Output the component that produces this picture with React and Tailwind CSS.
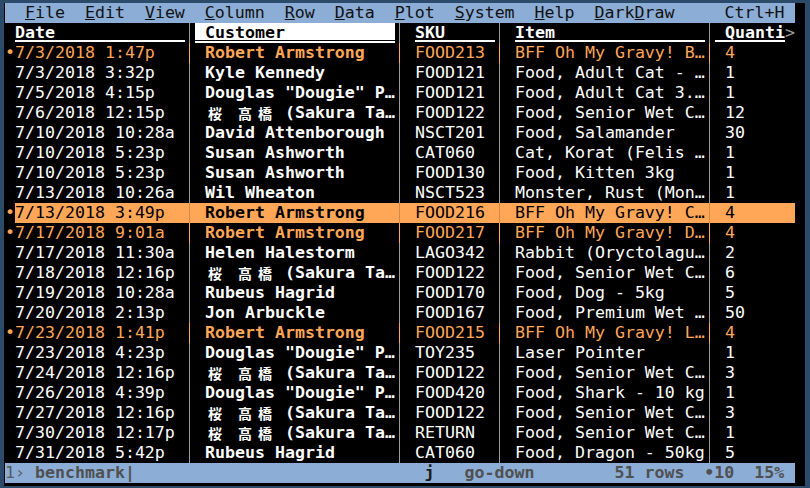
import React from "react";

const rows = [
  { date: "7/3/2018 1:47p", cust: "Robert Armstrong", sku: "FOOD213", item: "BFF Oh My Gravy! B…", qty: "4", sel: true },
  { date: "7/3/2018 3:32p", cust: "Kyle Kennedy", sku: "FOOD121", item: "Food, Adult Cat - …", qty: "1" },
  { date: "7/5/2018 4:15p", cust: 'Douglas "Dougie" P…', sku: "FOOD121", item: "Food, Adult Cat 3.…", qty: "1" },
  { date: "7/6/2018 12:15p", jp: true, sku: "FOOD122", item: "Food, Senior Wet C…", qty: "12" },
  { date: "7/10/2018 10:28a", cust: "David Attenborough", sku: "NSCT201", item: "Food, Salamander", qty: "30" },
  { date: "7/10/2018 5:23p", cust: "Susan Ashworth", sku: "CAT060", item: "Cat, Korat (Felis …", qty: "1" },
  { date: "7/10/2018 5:23p", cust: "Susan Ashworth", sku: "FOOD130", item: "Food, Kitten 3kg", qty: "1" },
  { date: "7/13/2018 10:26a", cust: "Wil Wheaton", sku: "NSCT523", item: "Monster, Rust (Mon…", qty: "1" },
  { date: "7/13/2018 3:49p", cust: "Robert Armstrong", sku: "FOOD216", item: "BFF Oh My Gravy! C…", qty: "4", sel: true, cursor: true },
  { date: "7/17/2018 9:01a", cust: "Robert Armstrong", sku: "FOOD217", item: "BFF Oh My Gravy! D…", qty: "4", sel: true },
  { date: "7/17/2018 11:30a", cust: "Helen Halestorm", sku: "LAGO342", item: "Rabbit (Oryctolagu…", qty: "2" },
  { date: "7/18/2018 12:16p", jp: true, sku: "FOOD122", item: "Food, Senior Wet C…", qty: "6" },
  { date: "7/19/2018 10:28a", cust: "Rubeus Hagrid", sku: "FOOD170", item: "Food, Dog - 5kg", qty: "5" },
  { date: "7/20/2018 2:13p", cust: "Jon Arbuckle", sku: "FOOD167", item: "Food, Premium Wet …", qty: "50" },
  { date: "7/23/2018 1:41p", cust: "Robert Armstrong", sku: "FOOD215", item: "BFF Oh My Gravy! L…", qty: "4", sel: true },
  { date: "7/23/2018 4:23p", cust: 'Douglas "Dougie" P…', sku: "TOY235", item: "Laser Pointer", qty: "1" },
  { date: "7/24/2018 12:16p", jp: true, sku: "FOOD122", item: "Food, Senior Wet C…", qty: "3" },
  { date: "7/26/2018 4:39p", cust: 'Douglas "Dougie" P…', sku: "FOOD420", item: "Food, Shark - 10 kg", qty: "1" },
  { date: "7/27/2018 12:16p", jp: true, sku: "FOOD122", item: "Food, Senior Wet C…", qty: "3" },
  { date: "7/30/2018 12:17p", jp: true, sku: "RETURN", item: "Food, Senior Wet C…", qty: "1" },
  { date: "7/31/2018 5:42p", cust: "Rubeus Hagrid", sku: "CAT060", item: "Food, Dragon - 50kg", qty: "5" },
];

const menu = [
  ["F", "ile"],
  ["E", "dit"],
  ["V", "iew"],
  ["C", "olumn"],
  ["R", "ow"],
  ["D", "ata"],
  ["P", "lot"],
  ["S", "ystem"],
  ["H", "elp"],
];

function Sep({ color }) {
  return (
    <div className="w-[10px] h-5 shrink-0 flex">
      <div className={`ml-[4px] w-px h-full ${color}`} />
    </div>
  );
}

function Sakura() {
  const cjk = "inline-block w-[20px] text-center font-['Noto_Sans_CJK_JP',sans-serif] text-[14px] align-top";
  return (
    <>
      <span className={cjk}>桜</span>
      {" "}
      <span className={cjk}>高</span>
      <span className={cjk}>橋</span>
      {" (Sakura Ta…"}
    </>
  );
}

function Row({ r }) {
  const fg = r.cursor ? "text-black" : r.sel ? "text-[#ffa657]" : "text-white";
  const sep = r.cursor ? "bg-[#d08a4c]" : r.sel ? "bg-[#ffa657]" : "bg-[#9a9a9a]";
  return (
    <div className="flex h-5">
      <div className="w-[10px] h-5 shrink-0 text-[#ffa657] text-center">
        {r.sel ? "•" : ""}
      </div>
      <div className={`flex h-5 ${fg} ${r.cursor ? "bg-[#ffa657]" : ""}`}>
        <div className="w-[170px] h-5 whitespace-pre overflow-hidden">{r.date}</div>
        <Sep color={sep} />
        <div className="w-[200px] h-5 pl-[10px] whitespace-pre overflow-hidden font-bold">
          {r.jp ? <Sakura /> : r.cust}
        </div>
        <Sep color={sep} />
        <div className="w-[90px] h-5 pl-[10px] whitespace-pre overflow-hidden">{r.sku}</div>
        <Sep color={sep} />
        <div className="w-[200px] h-5 pl-[10px] whitespace-pre overflow-hidden">{r.item}</div>
        <Sep color={sep} />
        <div className="w-[80px] h-5 pl-[10px] whitespace-pre overflow-hidden">{r.qty}</div>
      </div>
    </div>
  );
}

function Header() {
  const ul = "shadow-[inset_0_-1px_0_0_#000,inset_0_-3px_0_0_#fff]";
  return (
    <div className="flex h-5 text-white font-bold">
      <div className="w-[10px] h-5" />
      <div className={`w-[170px] h-5 ${ul}`}>Date</div>
      <Sep color="bg-[#9a9a9a]" />
      <div className="w-[200px] h-5 pl-[10px] bg-white text-black shadow-[inset_0_-2px_0_0_#fff,inset_0_-3px_0_0_#000]">
        Customer
      </div>
      <Sep color="bg-[#9a9a9a]" />
      <div className="w-[90px] h-5 pl-[10px]">
        <div className={`h-5 ${ul}`}>SKU</div>
      </div>
      <Sep color="bg-[#9a9a9a]" />
      <div className="w-[200px] h-5 pl-[10px]">
        <div className={`h-5 ${ul}`}>Item</div>
      </div>
      <Sep color="bg-[#9a9a9a]" />
      <div className={`w-[70px] h-5 pl-[10px] ${ul}`}>Quanti</div>
      <div className="w-[10px] h-5 text-[#9a9a9a] font-normal">&gt;</div>
    </div>
  );
}

export default function App() {
  return (
    <div className="w-[810px] h-[488px] bg-[#2c4a6a] pt-[3px] pl-[4px] pr-[5px] pb-[2px] font-['DejaVu_Sans_Mono',monospace] text-[16.6px] leading-5">
      <div className="h-full bg-black pl-[1px]">
        {/* menu bar */}
        <div className="w-[790px] h-5 bg-[#8badd6] text-[#111] whitespace-pre flex">
          <span>{"  "}</span>
          {menu.map(([k, rest], i) => (
            <span key={i}>
              <span className="underline">{k}</span>
              {rest + "  "}
            </span>
          ))}
          <span>
            <span className="underline">D</span>ark<span className="underline">D</span>raw
          </span>
          <span>{"     Ctrl+H "}</span>
        </div>

        <Header />
        {rows.map((r, i) => (
          <Row key={i} r={r} />
        ))}

        {/* status bar */}
        <div className="w-[790px] h-5 bg-[#8badd6] text-[#505050] font-bold whitespace-pre">
          <span className="font-normal text-[#5a5a5a]">1›</span>
          {" benchmark|" + " ".repeat(29)}
          <span className="text-[#1a1a1a]">j</span>
          {"   go-down        51 rows  •10  15% "}
        </div>
      </div>
    </div>
  );
}
